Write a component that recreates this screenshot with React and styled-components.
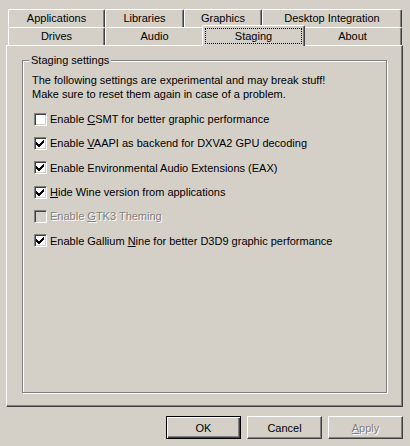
import styled, { createGlobalStyle, css } from "styled-components";

const GlobalStyle = createGlobalStyle`
  html, body {
    margin: 0;
    padding: 0;
    background: #d4d0c8;
  }
  body {
    font-family: "Liberation Sans", Arial, sans-serif;
    font-size: 11px;
    color: #000;
  }
`;

const backRow = [
  { label: "Applications", w: 97 },
  { label: "Libraries", w: 79 },
  { label: "Graphics", w: 78 },
  { label: "Desktop Integration", w: 140 },
];

const frontRow = [
  { label: "Drives", w: 97 },
  { label: "Audio", w: 99 },
  { label: "Staging", w: 99, active: true },
  { label: "About", w: 99 },
];

const options = [
  { pre: "Enable ", key: "C", post: "SMT for better graphic performance", checked: false },
  { pre: "Enable ", key: "V", post: "AAPI as backend for DXVA2 GPU decoding", checked: true },
  { pre: "Enable Environmental Audio Extensions (EAX)", key: "", post: "", checked: true },
  { pre: "", key: "H", post: "ide Wine version from applications", checked: true },
  { pre: "Enable ", key: "G", post: "TK3 Theming", checked: false, disabled: true },
  { pre: "Enable Gallium ", key: "N", post: "ine for better D3D9 graphic performance", checked: true },
];

export default function App() {
  return (
    <>
      <GlobalStyle />
      <Window>
        <TabStrip>
          <TabRow>
            {backRow.map((t) => (
              <Tab key={t.label} $w={t.w}>
                {t.label}
              </Tab>
            ))}
          </TabRow>
          <TabRow>
            {frontRow.map((t) => (
              <Tab key={t.label} $w={t.w} $active={t.active}>
                {t.active ? <Focus>{t.label}</Focus> : t.label}
              </Tab>
            ))}
          </TabRow>
        </TabStrip>
        <Panel>
          <GroupBox>
            <Legend>Staging settings</Legend>
            <Intro>
              The following settings are experimental and may break stuff!
              <br />
              Make sure to reset them again in case of a problem.
            </Intro>
            <Options>
              {options.map((o, i) => (
                <Row key={i} $disabled={o.disabled}>
                  <Check $disabled={o.disabled}>
                    {o.checked && (
                      <svg width="11" height="11" viewBox="0 0 11 11" shapeRendering="crispEdges">
                        <path
                          fill="#000"
                          d="M8 2h1v1h-1z M7 3h2v1h-2z M1 4h1v1h-1z M6 4h3v1h-3z M1 5h2v1h-2z M5 5h3v1h-3z M1 6h6v1h-6z M2 7h4v1h-4z M3 8h2v1h-2z"
                        />
                      </svg>
                    )}
                  </Check>
                  <span>
                    {o.pre}
                    {o.key && <U>{o.key}</U>}
                    {o.post}
                  </span>
                </Row>
              ))}
            </Options>
          </GroupBox>
        </Panel>
        <ButtonBar>
          <Button $default>OK</Button>
          <Button>Cancel</Button>
          <Button disabled>
            <U>A</U>pply
          </Button>
        </ButtonBar>
      </Window>
    </>
  );
}

const Window = styled.div`
  box-sizing: border-box;
  width: 410px;
  height: 446px;
  padding: 9px 7px 7px 6px;
  display: flex;
  flex-direction: column;
`;

const TabStrip = styled.div`
  padding-left: 2px;
`;

const TabRow = styled.div`
  display: flex;
  align-items: flex-start;
  height: 18px;
`;

const Tab = styled.div`
  box-sizing: border-box;
  width: ${(p) => p.$w}px;
  height: 18px;
  display: flex;
  align-items: center;
  justify-content: center;
  padding-bottom: 1px;
  background: #d4d0c8;
  border-top: 1px solid #fff;
  border-left: 1px solid #fff;
  border-right: 1px solid #404040;
  border-radius: 2px 2px 0 0;
  box-shadow: inset -1px 0 0 #808080;
  white-space: nowrap;

  ${(p) =>
    p.$active &&
    css`
      position: relative;
      z-index: 1;
      width: ${p.$w + 4}px;
      height: 21px;
      margin: -2px -2px -1px;
      padding: 2px 2px 2px;
      align-items: stretch;
    `}
`;

const Focus = styled.span`
  flex: 1;
  display: flex;
  align-items: center;
  justify-content: center;
  border: 1px dotted #000;
`;

const Panel = styled.div`
  flex: 1;
  box-sizing: border-box;
  display: flex;
  padding: 14px 15px 13px 15px;
  border-top: 1px solid #fff;
  border-left: 1px solid #fff;
  border-right: 1px solid #404040;
  border-bottom: 1px solid #404040;
  box-shadow: inset -1px -1px 0 #808080;
`;

const GroupBox = styled.div`
  position: relative;
  flex: 1;
  padding: 12px 9px 0 9px;
  border: 1px solid #808080;
  box-shadow: 1px 1px 0 #fff, inset 1px 1px 0 #fff;
`;

const Legend = styled.span`
  position: absolute;
  top: -7px;
  left: 6px;
  padding: 0 2px;
  line-height: 13px;
  background: #d4d0c8;
`;

const Intro = styled.p`
  margin: 0;
  line-height: 14px;
`;

const Options = styled.div`
  display: flex;
  flex-direction: column;
  margin-top: 6px;
`;

const Row = styled.div`
  display: flex;
  align-items: center;
  gap: 3px;
  height: 24.3px;
  padding-left: 2px;
  white-space: nowrap;
  ${(p) =>
    p.$disabled &&
    css`
      color: #808080;
      text-shadow: 1px 1px 0 #fff;
    `}
`;

const Check = styled.span`
  box-sizing: border-box;
  width: 13px;
  height: 13px;
  flex: none;
  display: flex;
  border-top: 1px solid #808080;
  border-left: 1px solid #808080;
  border-right: 1px solid #fff;
  border-bottom: 1px solid #fff;
  box-shadow: inset 1px 1px 0 #404040, inset -1px -1px 0 #d4d0c8;
  background: ${(p) => (p.$disabled ? "#d4d0c8" : "#fff")};
`;

const U = styled.span`
  text-decoration: underline;
`;

const ButtonBar = styled.div`
  display: flex;
  justify-content: flex-end;
  gap: 6px;
  margin-top: 9px;
`;

const Button = styled.button`
  box-sizing: border-box;
  width: 75px;
  height: 23px;
  padding: 0;
  font: 11px "Liberation Sans", Arial, sans-serif;
  color: #000;
  background: #d4d0c8;
  border: 1px solid;
  border-color: #fff #404040 #404040 #fff;
  box-shadow: inset -1px -1px 0 #808080;

  ${(p) =>
    p.$default &&
    css`
      border-color: #000;
      box-shadow: inset 1px 1px 0 #fff, inset -1px -1px 0 #404040,
        inset -2px -2px 0 #808080;
    `}

  &:disabled {
    color: #808080;
    text-shadow: 1px 1px 0 #fff;
  }
`;
